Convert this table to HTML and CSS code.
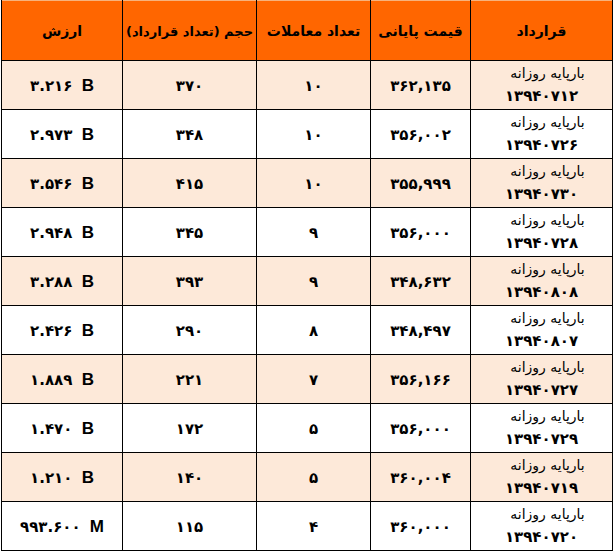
FILE: index.html
```html
<!DOCTYPE html>
<html lang="fa" dir="rtl">
<head>
<meta charset="utf-8">
<title>معاملات بارپایه روزانه</title>
<link rel="stylesheet" href="styles.css">
</head>
<body>
<div class="sheet">
  <div class="cell head">قرارداد</div>
  <div class="cell head">قیمت پایانی</div>
  <div class="cell head">تعداد معاملات</div>
  <div class="cell head long">حجم (تعداد قرارداد)</div>
  <div class="cell head">ارزش</div>

  <div class="cell tint contract"><span class="name">بارپایه روزانه</span><span class="date">۱۳۹۴۰۷۱۲</span></div>
  <div class="cell tint num">۳۶۲,۱۳۵</div>
  <div class="cell tint num">۱۰</div>
  <div class="cell tint num">۳۷۰</div>
  <div class="cell tint value"><span class="amt" dir="ltr">۳.۲۱۶ <b class="unit">B</b></span></div>

  <div class="cell contract"><span class="name">بارپایه روزانه</span><span class="date">۱۳۹۴۰۷۲۶</span></div>
  <div class="cell num">۳۵۶,۰۰۲</div>
  <div class="cell num">۱۰</div>
  <div class="cell num">۳۴۸</div>
  <div class="cell value"><span class="amt" dir="ltr">۲.۹۷۳ <b class="unit">B</b></span></div>

  <div class="cell tint contract"><span class="name">بارپایه روزانه</span><span class="date">۱۳۹۴۰۷۳۰</span></div>
  <div class="cell tint num">۳۵۵,۹۹۹</div>
  <div class="cell tint num">۱۰</div>
  <div class="cell tint num">۴۱۵</div>
  <div class="cell tint value"><span class="amt" dir="ltr">۳.۵۴۶ <b class="unit">B</b></span></div>

  <div class="cell contract"><span class="name">بارپایه روزانه</span><span class="date">۱۳۹۴۰۷۲۸</span></div>
  <div class="cell num">۳۵۶,۰۰۰</div>
  <div class="cell num">۹</div>
  <div class="cell num">۳۴۵</div>
  <div class="cell value"><span class="amt" dir="ltr">۲.۹۴۸ <b class="unit">B</b></span></div>

  <div class="cell tint contract"><span class="name">بارپایه روزانه</span><span class="date">۱۳۹۴۰۸۰۸</span></div>
  <div class="cell tint num">۳۴۸,۶۳۲</div>
  <div class="cell tint num">۹</div>
  <div class="cell tint num">۳۹۳</div>
  <div class="cell tint value"><span class="amt" dir="ltr">۳.۲۸۸ <b class="unit">B</b></span></div>

  <div class="cell contract"><span class="name">بارپایه روزانه</span><span class="date">۱۳۹۴۰۸۰۷</span></div>
  <div class="cell num">۳۴۸,۴۹۷</div>
  <div class="cell num">۸</div>
  <div class="cell num">۲۹۰</div>
  <div class="cell value"><span class="amt" dir="ltr">۲.۴۲۶ <b class="unit">B</b></span></div>

  <div class="cell tint contract"><span class="name">بارپایه روزانه</span><span class="date">۱۳۹۴۰۷۲۷</span></div>
  <div class="cell tint num">۳۵۶,۱۶۶</div>
  <div class="cell tint num">۷</div>
  <div class="cell tint num">۲۲۱</div>
  <div class="cell tint value"><span class="amt" dir="ltr">۱.۸۸۹ <b class="unit">B</b></span></div>

  <div class="cell contract"><span class="name">بارپایه روزانه</span><span class="date">۱۳۹۴۰۷۲۹</span></div>
  <div class="cell num">۳۵۶,۰۰۰</div>
  <div class="cell num">۵</div>
  <div class="cell num">۱۷۲</div>
  <div class="cell value"><span class="amt" dir="ltr">۱.۴۷۰ <b class="unit">B</b></span></div>

  <div class="cell tint contract"><span class="name">بارپایه روزانه</span><span class="date">۱۳۹۴۰۷۱۹</span></div>
  <div class="cell tint num">۳۶۰,۰۰۴</div>
  <div class="cell tint num">۵</div>
  <div class="cell tint num">۱۴۰</div>
  <div class="cell tint value"><span class="amt" dir="ltr">۱.۲۱۰ <b class="unit">B</b></span></div>

  <div class="cell contract"><span class="name">بارپایه روزانه</span><span class="date">۱۳۹۴۰۷۲۰</span></div>
  <div class="cell num">۳۶۰,۰۰۰</div>
  <div class="cell num">۴</div>
  <div class="cell num">۱۱۵</div>
  <div class="cell value"><span class="amt" dir="ltr">۹۹۳.۶۰۰ <b class="unit">M</b></span></div>
</div>
</body>
</html>
```

FILE: styles.css
```css
html, body {
  margin: 0;
  padding: 0;
  background: #ffffff;
}

body {
  font-family: "DejaVu Sans", "Noto Sans", sans-serif;
  color: #000000;
}

.sheet {
  display: grid;
  direction: rtl;
  grid-template-columns: 141px 99px 113px 133px 120px;
  grid-template-rows: 60px repeat(10, 48px);
  gap: 1px;
  padding: 0 1px 1px 1px;
  background: #000000;
  width: max-content;
}

.cell {
  display: flex;
  align-items: center;
  justify-content: center;
  background: #ffffff;
  text-align: center;
  white-space: nowrap;
  overflow: hidden;
}

.tint {
  background: #fde9d9;
}

.head {
  background: #ff6600;
  border-top: 1px solid #f7b27c;
  font-weight: bold;
  font-size: 14px;
  padding-top: 1px;
  box-sizing: border-box;
}

.head.long {
  font-size: 13px;
}

.num {
  font-weight: bold;
  font-size: 15px;
  letter-spacing: -2px;
  padding-top: 2px;
  box-sizing: border-box;
}

.contract {
  flex-direction: column;
  line-height: 23px;
}

.name {
  font-size: 14px;
  padding-left: 12px;
}

.date {
  font-weight: bold;
  font-size: 15px;
  letter-spacing: -2px;
}

.value {
  font-weight: bold;
  font-size: 15px;
  padding-top: 2px;
  box-sizing: border-box;
}

.amt {
  letter-spacing: -2px;
}

.unit {
  font-family: "Liberation Sans", Arial, sans-serif;
  font-size: 17px;
  font-weight: bold;
  letter-spacing: 0;
  margin-left: 4px;
}
```
